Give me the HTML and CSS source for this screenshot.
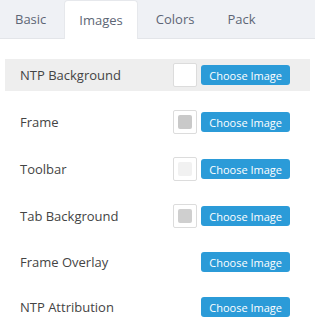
FILE: index.html
```html
<!DOCTYPE html>
<html lang="en">
<head>
    <meta charset="UTF-8">
    <title>Theme Images</title>
    <link rel="stylesheet" href="styles.css">
</head>
<body>

<div class="tabs">
    <div class="tab">Basic</div>
    <div class="tab active">Images</div>
    <div class="tab">Colors</div>
    <div class="tab">Pack</div>
</div>

<div class="image-list">
    <div class="row hover">
        <span class="label">NTP Background</span>
        <div class="controls">
            <span class="swatch"></span>
            <button class="choose">Choose Image</button>
        </div>
    </div>
    <div class="row">
        <span class="label">Frame</span>
        <div class="controls">
            <span class="swatch"><span class="chip" style="background:#c9c9c9"></span></span>
            <button class="choose">Choose Image</button>
        </div>
    </div>
    <div class="row">
        <span class="label">Toolbar</span>
        <div class="controls">
            <span class="swatch"><span class="chip" style="background:#f1f1f1"></span></span>
            <button class="choose">Choose Image</button>
        </div>
    </div>
    <div class="row">
        <span class="label">Tab Background</span>
        <div class="controls">
            <span class="swatch"><span class="chip" style="background:#cfcfcf"></span></span>
            <button class="choose">Choose Image</button>
        </div>
    </div>
    <div class="row">
        <span class="label">Frame Overlay</span>
        <div class="controls">
            <button class="choose">Choose Image</button>
        </div>
    </div>
    <div class="row">
        <span class="label">NTP Attribution</span>
        <div class="controls">
            <button class="choose">Choose Image</button>
        </div>
    </div>
</div>

</body>
</html>
```

FILE: styles.css
```css
body {
    margin: 0;
    font-family: "Open Sans", Arial, sans-serif;
    color: #444;
    background: #fff;
}

.tabs {
    display: flex;
    height: 38px;
    background-color: #eff1f5;
    border-bottom: 1px solid #e3e5e9;
}

.tab {
    padding: 0 15px;
    margin-right: 3px;
    font-size: 13px;
    line-height: 38px;
    color: #5d6675;
}

.tab.active {
    background-color: #fff;
    border-radius: 4px 4px 0 0;
    border: 1px solid #e6e8ec;
    border-bottom: none;
    margin-bottom: -1px;
    padding: 0 14px;
    line-height: 38px;
}

.image-list {
    padding: 20px 5px 0 5px;
}

.row {
    display: flex;
    align-items: center;
    padding: 4px 20px 4px 15px;
    margin-bottom: 15px;
}

.row.hover {
    background-color: #eeeeee;
}

.label {
    font-size: 13px;
    line-height: 22px;
    color: #444;
}

.controls {
    margin-left: auto;
    display: flex;
    align-items: center;
    gap: 4px;
}

.swatch {
    box-sizing: border-box;
    width: 24px;
    height: 24px;
    padding: 4px;
    background: #fff;
    border: 1px solid #dcdcdc;
    border-radius: 2px;
}

.chip {
    display: block;
    width: 14px;
    height: 14px;
    border-radius: 2px;
}

.choose {
    font-family: "Open Sans", Arial, sans-serif;
    font-size: 11px;
    height: 20px;
    padding: 0 8px;
    color: #fff;
    background-color: #2b9bd8;
    border: none;
    border-radius: 3px;
}
```
